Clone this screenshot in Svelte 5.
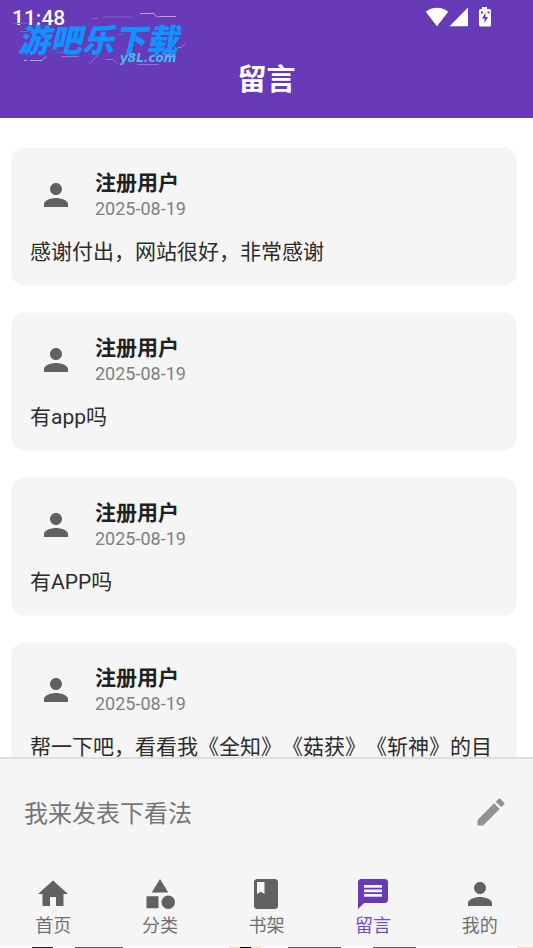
<script>
  const comments = [
    { user: '注册用户', date: '2025-08-19', text: '感谢付出，网站很好，非常感谢' },
    { user: '注册用户', date: '2025-08-19', text: '有app吗' },
    { user: '注册用户', date: '2025-08-19', text: '有APP吗' },
    { user: '注册用户', date: '2025-08-19', text: '帮一下吧，看看我《全知》《菇获》《斩神》的目' }
  ];

  const person = 'M12 12c2.21 0 4-1.79 4-4s-1.79-4-4-4-4 1.79-4 4 1.79 4 4 4zm0 2c-2.67 0-8 1.34-8 4v2h16v-2c0-2.66-5.33-4-8-4z';

  const tabs = [
    { label: '首页', path: 'M10 20v-6h4v6h5v-8h3L12 3 2 12h3v8z' },
    { label: '分类', path: 'M12 2l-5.5 9h11zM17.5 13a4.5 4.5 0 1 0 0 9 4.5 4.5 0 0 0 0-9zM3 13.5h8v8H3z' },
    { label: '书架', path: 'M18 2H6c-1.1 0-2 .9-2 2v16c0 1.1.9 2 2 2h12c1.1 0 2-.9 2-2V4c0-1.1-.9-2-2-2zM6 4h5v8l-2.5-1.5L6 12V4z' },
    { label: '留言', path: 'M20 2H4c-1.1 0-1.99.9-1.99 2L2 22l4-4h14c1.1 0 2-.9 2-2V4c0-1.1-.9-2-2-2zM6 6h12v1.900H6zM6 9h12v1.900H6zM6 12h12v1.900H6z', active: true },
    { label: '我的', path: person }
  ];

  let draft = $state('');
</script>

<div class="page">
  <header>
    <div class="status">
      <time>11:48</time>
      <div class="signals">
        <svg width="24" height="20" viewBox="0 0 24 20" aria-hidden="true"><path d="M.8 4.8C7-.6 17-.6 23.200 4.8L12 19.200z" /></svg>
        <svg width="20" height="20" viewBox="0 0 20 20" aria-hidden="true"><path d="M.5 19.200h18.500V.5z" /></svg>
        <svg class="battery" width="14" height="20" viewBox="0 0 14 20" aria-hidden="true">
          <path fill-rule="evenodd" d="M4 0h5v2h2.500Q13 2 13 3.500v14.500q0 1.500-1.500 1.500h-9Q1 19.500 1 18V3.500Q1 2 2.500 2H4zM7.500 5.500L4 11.500h2.500v4.500l3.500-6H7.500zM3 4.500v2h2v-2zM9.500 4.500v2h2v-2z" />
        </svg>
      </div>
    </div>
    <h1>留言</h1>
    <div class="brand">
      <svg width="192" height="64" viewBox="0 0 192 64" fill="none" aria-hidden="true">
        <path d="M140 9.500h14l3 4M158 12.500h18" stroke="#b9a8e0" />
        <path d="M103 14.500l3-1.500h26M91 14.500h8" stroke="#7f62cc" />
        <path d="M13 19.500h14M20 27.500h9M56 48.500h8M119 30.500h6" stroke="#4f6ad0" />
        <path d="M24 56.500h3M30 56.500h12l4-4M30 49.500h4" stroke="#a9b0e6" />
        <path d="M61 52.500h18M89 60l9-9M106 55.500h7l4 4M137 60.500h22" stroke="#8c78d2" />
        <path d="M163 50.500h13M178 43.500h3l4-4" stroke="#9a86d8" />
      </svg>
      <span class="brand-name">游吧乐下载</span>
      <span class="brand-site">y8L.com</span>
    </div>
  </header>

  <main>
    {#each comments as comment}
      <article>
        <div class="author">
          <span class="avatar"><svg class="icon" viewBox="0 0 24 24" aria-hidden="true"><path d={person} /></svg></span>
          <div>
            <h2>{comment.user}</h2>
            <time>{comment.date}</time>
          </div>
        </div>
        <p>{comment.text}</p>
      </article>
    {/each}
  </main>

  <form onsubmit={(e) => e.preventDefault()}>
    <input type="text" aria-label="我来发表下看法" placeholder="我来发表下看法" bind:value={draft} />
    <button type="submit" aria-label="发表">
      <svg class="icon" viewBox="0 0 24 24" aria-hidden="true"><path d="M3 17.250V21h3.750L17.810 9.940l-3.750-3.750L3 17.250zM20.710 7.040c.39-.39.39-1.020 0-1.410l-2.340-2.340c-.39-.39-1.020-.39-1.410 0l-1.830 1.830 3.750 3.750 1.830-1.830z" /></svg>
    </button>
  </form>

  <nav>
    {#each tabs as tab}
      <a href="#{tab.label}" class:active={tab.active} aria-current={tab.active ? 'page' : undefined}>
        <svg class="icon" viewBox="0 0 24 24" aria-hidden="true"><path d={tab.path} fill-rule="evenodd" /></svg>
        <span>{tab.label}</span>
      </a>
    {/each}
  </nav>
  <div class="edge"></div>
</div>

<style>
  :global(body) {
    margin: 0;
    background: #fff;
  }

  .page {
    display: flex;
    flex-direction: column;
    height: 100vh;
    overflow: hidden;
    font-family: Roboto, 'Noto Sans CJK SC', sans-serif;
    color: #212121;
  }

  svg {
    display: block;
    flex: none;
    fill: currentColor;
  }

  .icon {
    width: 36px;
    height: 36px;
  }

  header {
    position: relative;
    flex: none;
    height: 118px;
    background: #673ab7;
    color: #fff;
  }

  .status {
    display: flex;
    justify-content: space-between;
    align-items: center;
    height: 36px;
    padding: 0 41px 0 12px;
    font-size: 21px;
    font-weight: 500;
  }

  .signals {
    display: flex;
    align-items: center;
    height: 34px;
    margin-bottom: 2px;
  }

  .battery {
    margin-left: 9px;
  }

  h1 {
    margin: 0;
    padding-top: 22px;
    font-size: 29px;
    font-weight: 700;
    line-height: 44px;
    text-align: center;
  }

  .brand {
    position: absolute;
    top: 4px;
    left: 0;
    width: 192px;
    height: 64px;
    font-family: 'Noto Sans CJK SC', sans-serif;
    font-style: italic;
    font-weight: 900;
    white-space: nowrap;
  }

  .brand svg {
    position: absolute;
    top: 0;
    left: 0;
    fill: none;
  }

  .brand-name {
    position: absolute;
    top: 12px;
    left: 18px;
    font-size: 32px;
    line-height: 44px;
    color: #0f94ff;
  }

  .brand-site {
    position: absolute;
    top: 45px;
    left: 120px;
    font-family: 'DejaVu Sans', sans-serif;
    font-size: 12px;
    font-weight: 700;
    line-height: 18px;
    color: #43bdf8;
  }

  main {
    display: flex;
    flex: 1;
    flex-direction: column;
    gap: 28px;
    min-height: 0;
    padding: 30px 17px 0 12px;
    overflow: hidden;
  }

  article {
    flex: none;
    padding: 21px 18px 17px;
    border-radius: 12px;
    background: #f5f5f5;
    box-shadow: 0 0 2px #eee;
  }

  .author {
    display: flex;
    align-items: center;
    gap: 13px;
  }

  .avatar {
    display: flex;
    justify-content: center;
    width: 52px;
    color: #616161;
  }

  h2 {
    margin: 0;
    font-size: 21px;
    font-weight: 700;
    line-height: 28px;
  }

  article time {
    display: block;
    font-size: 18px;
    line-height: 24px;
    color: #808080;
  }

  p {
    margin: 15px 0 0;
    font-size: 21px;
    line-height: 32px;
    text-spacing-trim: space-all;
    color: #2c2c2c;
  }

  form {
    display: flex;
    flex: none;
    align-items: center;
    height: 106px;
    padding: 0 24px;
    border-top: 2px solid #dedede;
    background: #f5f5f5;
  }

  input {
    flex: 1;
    min-width: 0;
    height: 48px;
    padding: 4px 0 0;
    border: 0;
    outline: 0;
    background: none;
    font: inherit;
    font-size: 24px;
    color: #212121;
  }

  input::placeholder {
    color: #757575;
    opacity: 1;
  }

  button {
    padding: 0;
    border: 0;
    background: none;
    color: #929292;
  }

  nav {
    display: flex;
    flex: none;
    height: 82px;
    background: #f5f5f5;
    box-shadow: 0 0 2px #e8e8e8;
  }

  nav a {
    display: flex;
    flex: 1;
    flex-direction: column;
    align-items: center;
    padding-top: 11px;
    font-size: 18px;
    line-height: 28px;
    color: #616161;
    text-decoration: none;
  }

  nav a span {
    opacity: 0.9;
  }

  nav a.active {
    color: #673ab7;
  }

  .edge {
    flex: none;
    height: 1px;
    background: linear-gradient(90deg, #fff 6%, #222 6% 10%, #fff 10% 14%, #555 14% 23%, #fff 23% 43%, #eadfc5 43% 45%, #000 45% 47%, #eadfc5 47% 49%, #fff 49% 54%, #555 54% 64%, #fff 64% 70%, #555 70% 78%, #fff 78% 97%, #eadfc5 97%);
  }
</style>
